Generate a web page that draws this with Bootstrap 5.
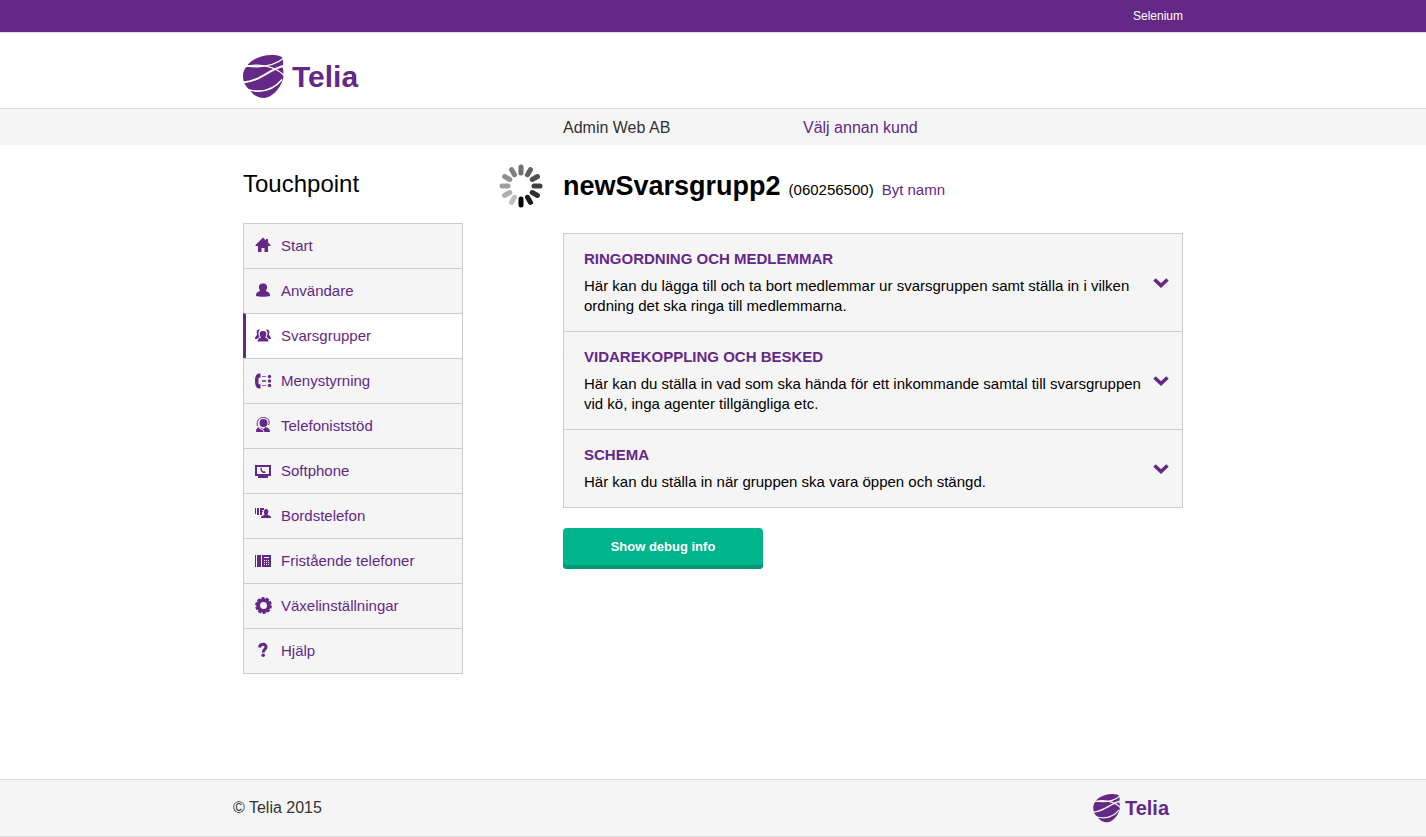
<!DOCTYPE html>
<html lang="sv">
<head>
<meta charset="utf-8">
<meta name="viewport" content="width=device-width, initial-scale=1">
<title>Telia Touchpoint</title>
<link href="https://cdn.jsdelivr.net/npm/bootstrap@5.3.0/dist/css/bootstrap.min.css" rel="stylesheet">
<style>
:root { --telia: #642887; --line: #ccc; --panel: #f5f5f5; }
body { font: 15px/20px "Liberation Sans", Arial, sans-serif; color: #000; background: #fff; }
a { color: var(--telia); text-decoration: none; }
a:hover { color: var(--telia); text-decoration: underline; }
.container { max-width: 960px; padding-left: 10px; padding-right: 10px; }
.row { --bs-gutter-x: 20px; }
.topbar { background: var(--telia); border-bottom: 1px solid #ddd; font-size: 12px; line-height: 32px; }
.topbar a { color: #fff; }
.brandbar { height: 75px; padding-top: 22px; }
.brand { display: inline-flex; align-items: center; color: var(--telia); font-weight: bold; }
.brand:hover { text-decoration: none; }
.brand-lg { gap: 7px; font-size: 30px; line-height: 44px; }
.brand-sm { gap: 4px; font-size: 20px; line-height: 30px; }
.customer { background: var(--panel); border-top: 1px solid #ddd; font-size: 16px; line-height: 34px; padding-top: 2px; color: #333; }
.product { font-size: 24px; line-height: 30px; font-weight: normal; margin: 24px 0 24px; }
.side .list-group-item { display: flex; align-items: center; gap: 9px; height: 45px; padding: 0 0 0 10px; background: var(--panel); color: var(--telia); border: 1px solid var(--line); border-bottom: 0; }
.side .list-group-item + .list-group-item.active { margin-top: 0; border-top-width: 1px; }
.side .list-group-item:last-child { height: 46px; border-bottom: 1px solid var(--line); }
.side .list-group-item.active { background: #fff; border-left: 3px solid var(--telia); padding-left: 8px; }
.side svg { fill: currentColor; width: 18px; height: 18px; flex: none; }
.title-row { margin: 24px 0 29px; }
.title-row h1 { font-size: 27px; line-height: 35px; font-weight: bold; margin: 0; }
.spin { margin-top: 19px; }
.panels .list-group-item { padding: 15px 13px 15px 20px; background: var(--panel); border: 1px solid var(--line); border-bottom: 0; color: #000; text-align: left; }
.panels .list-group-item:last-child { border-bottom: 1px solid var(--line); }
.panels h2 { font-size: 15px; line-height: 20px; font-weight: bold; color: var(--telia); margin: 0 0 7px; }
.btn-debug, .btn-debug:hover { width: 200px; height: 41px; padding: 0 0 3px; margin-top: 20px; background: #00b48c; color: #fff; border: 0; border-radius: 4px; box-shadow: inset 0 -4px #009974; font-size: 13px; font-weight: bold; }
.foot { background: var(--panel); border-top: 1px solid #ddd; border-bottom: 1px solid #ddd; font-size: 16px; color: #333; }
.foot-inner { height: 56px; padding: 0; }
</style>
</head>
<body class="d-flex flex-column min-vh-100">
<svg class="d-none" aria-hidden="true">
  <symbol id="globe-main" viewBox="0 0 42 44">
    <path fill="#642887" d="M0 20C1 10 12 0 29 0c6 0 10 1 11 4l.5 16C41 28 31 43 21 43 14 43 9 39 7 35 2 31 0 27 0 20z"/>
    <path fill="none" stroke="#fff" stroke-width="1.400" d="M2 11.500C14 9 30 9.500 42 21M4 11C18 13 31 11 41 3"/>
    <path fill="none" stroke="#fff" stroke-width="2" d="M0 27.500C18 26 24 15 42 10.500"/>
    <path fill="none" stroke="#fff" stroke-width="1.600" d="M4 34.500c15 4 27 0 35-10"/>
    <path fill="#fff" d="M39 12l4-2v9zM0 9l5 1-5 5z"/>
  </symbol>
  <symbol id="globe-foot" viewBox="0 0 42 44">
    <path fill="#642887" d="M0 20C1 10 12 0 29 0c6 0 10 1 11 4l.5 16C41 28 31 43 21 43 14 43 9 39 7 35 2 31 0 27 0 20z"/>
    <path fill="none" stroke="#f5f5f5" stroke-width="1.800" d="M2 11.500C14 9 30 9.500 42 21M4 11C18 13 31 11 41 3M4 34.500c15 4 27 0 35-10"/>
    <path fill="none" stroke="#f5f5f5" stroke-width="2.200" d="M0 27.500C18 26 24 15 42 10.500"/>
    <path fill="#f5f5f5" d="M39 12l4-2v9z"/>
  </symbol>
  <symbol id="chev" viewBox="0 0 16 12"><path d="M1.500 2.500L8 8.500l6.500-6" fill="none" stroke="#642887" stroke-width="3.600"/></symbol>
</svg>

<div class="topbar"><div class="container d-flex justify-content-end"><a href="#">Selenium</a></div></div>
<header>
  <div class="brandbar"><div class="container">
    <a class="brand brand-lg" href="#"><svg width="42" height="44"><use href="#globe-main"/></svg><span>Telia</span></a>
  </div></div>
  <div class="customer"><div class="container"><div class="row">
    <div class="col-3 offset-4">Admin Web AB</div>
    <div class="col-3"><a href="#">Välj annan kund</a></div>
  </div></div></div>
</header>

<main class="container flex-grow-1 pb-5">
  <div class="row">
    <div class="col-3">
      <div class="product">Touchpoint</div>
      <nav class="list-group rounded-0 side">
        <a class="list-group-item" href="#"><svg viewBox="0 0 18 18"><path d="M9 .5L1.500 8v1H4v6h3.500v-4h3v4H14V9h2.500V8L14 5.500V2h-2v1.500z"/></svg>Start</a>
        <a class="list-group-item" href="#"><svg viewBox="0 0 18 18"><path d="M9 1.500c3 0 4.500 2 4 4.500 0 1-1 2-1 3 2 1 4 1 4 5-3 1-11 1-14 0 0-4 2-4 4-5 0-1-1-2-1-3-.5-2.500 1-4.500 4-4.500z"/></svg>Användare</a>
        <a class="list-group-item active" href="#" aria-current="page"><svg viewBox="0 0 18 18"><path d="M9 4c3 0 4 2 3 5l-1 1.500c2 .5 3.500 1.500 3.500 4h-11c0-2.500 1.500-3.500 3.500-4L6 9C5 6 6 4 9 4z"/><path d="M6 2.500C3 2 2 4 3 7c0 2-2 2-2 5h2l2.500-2C4 7 4 5 6 2.500zM12 2.500c3-.5 4 1.500 3 4.500 0 2 2 2 2 5h-2l-2.500-2c1.500-3 1.500-5-.5-7.500z"/></svg>Svarsgrupper</a>
        <a class="list-group-item" href="#"><svg viewBox="0 0 18 18"><path d="M5 1.500h1.500v4L4.500 6v6l2 .5v4H5C2 16 1 13 1 9s1-7 4-7.500z"/><path d="M8 4h4v1H8zM8 8h4v2H8zM8 13h4v1H8z" opacity=".75"/><circle cx="15.500" cy="4.500" r="1.700"/><circle cx="15.500" cy="9" r="1.700"/><circle cx="15.500" cy="13.500" r="1.700"/></svg>Menystyrning</a>
        <a class="list-group-item" href="#"><svg viewBox="0 0 18 18"><circle cx="9.500" cy="6" r="4"/><path d="M3.500 9C2 4 5 .5 9.500.5s7 3.500 5 7.500" fill="none" stroke="currentColor"/><path d="M3.500 8C4 10 7 11 9.500 12l2-2c3 1 4.500 2 4.500 5H2c0-3 1-4 3-5z"/><path d="M5 10c0 3 5 1.500 5 5" fill="none" stroke="#f5f5f5"/></svg>Telefoniststöd</a>
        <a class="list-group-item" href="#"><svg viewBox="0 0 18 18"><path fill-rule="evenodd" d="M1 3h16v11H1zM3 5v7h12V5zM4 14h10v2H4z"/><path d="M6.500 5.500l1.500.5-.3 1.500c.5 1 1 1.500 2 2l1-.5 1 1.500c-3 2-6-2-5.200-5z"/></svg>Softphone</a>
        <a class="list-group-item" href="#"><svg viewBox="0 0 18 18"><path d="M1 1h1v6H1zM3 1h2v7H3zM6 1h4v2H8v1h1v1H8v3H6zM12 2c2 0 3 2 2 4l-.5 2c3 .5 3.500 1 3.500 3H7c0-2 1-2.500 3.500-3L10 6c0-2 0-4 2-4z"/></svg>Bordstelefon</a>
        <a class="list-group-item" href="#"><svg viewBox="0 0 18 18"><path d="M1 3h1v12H1zM3 3h4v12H3z"/><path fill-rule="evenodd" d="M8 3h9v12H8zM10 5v1h5V5zM10 8v1h1V8zM12 8v1h1V8zM14 8v1h1V8zM10 10v1h1v-1zM12 10v1h1v-1zM14 10v1h1v-1zM10 12v1h1v-1zM12 12v1h1v-1zM14 12v1h1v-1z"/></svg>Fristående telefoner</a>
        <a class="list-group-item" href="#"><svg viewBox="0 0 18 18"><circle cx="9.500" cy="8.500" r="5.400" fill="none" stroke="currentColor" stroke-width="3.800"/><circle cx="9.500" cy="8.500" r="7.300" fill="none" stroke="currentColor" stroke-width="2.200" stroke-dasharray="3 1.587"/></svg>Växelinställningar</a>
        <a class="list-group-item" href="#"><svg viewBox="0 0 18 18"><path d="M5.500 5.500C6 1 12.500 1.500 12 5.200c-.3 2-2.800 2.300-2.800 5.300" fill="none" stroke="currentColor" stroke-width="3"/><circle cx="9.200" cy="13.300" r="1.800"/></svg>Hjälp</a>
      </nav>
    </div>
    <div class="col-1 d-flex justify-content-end align-items-start">
      <svg class="spin flex-shrink-0" width="44" height="44" viewBox="-22 -22 44 44" role="img" aria-label="Laddar" stroke-width="5" stroke-linecap="round">
        <path d="M0-13V-19" stroke="#707070"/><path d="M0-13V-19" stroke="#606060" transform="rotate(30)"/><path d="M0-13V-19" stroke="#505050" transform="rotate(60)"/><path d="M0-13V-19" stroke="#404040" transform="rotate(90)"/><path d="M0-13V-19" stroke="#303030" transform="rotate(120)"/><path d="M0-13V-19" stroke="#1c1c1c" transform="rotate(150)"/><path d="M0-13V-19" stroke="#000" transform="rotate(180)"/><path d="M0-13V-19" stroke="#c0c0c0" transform="rotate(210)"/><path d="M0-13V-19" stroke="#b0b0b0" transform="rotate(240)"/><path d="M0-13V-19" stroke="#a0a0a0" transform="rotate(270)"/><path d="M0-13V-19" stroke="#909090" transform="rotate(300)"/><path d="M0-13V-19" stroke="#808080" transform="rotate(330)"/>
      </svg>
    </div>
    <div class="col-8">
      <div class="title-row d-flex align-items-baseline gap-2"><h1>newSvarsgrupp2</h1><span>(060256500)</span><a href="#">Byt namn</a></div>
      <div class="list-group rounded-0 panels">
        <button type="button" class="list-group-item d-flex align-items-center justify-content-between gap-2"><span><h2>RINGORDNING OCH MEDLEMMAR</h2>Här kan du lägga till och ta bort medlemmar ur svarsgruppen samt ställa in i vilken ordning det ska ringa till medlemmarna.</span><svg class="flex-shrink-0" width="16" height="12"><use href="#chev"/></svg></button>
        <button type="button" class="list-group-item d-flex align-items-center justify-content-between gap-2"><span><h2>VIDAREKOPPLING OCH BESKED</h2>Här kan du ställa in vad som ska hända för ett inkommande samtal till svarsgruppen vid kö, inga agenter tillgängliga etc.</span><svg class="flex-shrink-0" width="16" height="12"><use href="#chev"/></svg></button>
        <button type="button" class="list-group-item d-flex align-items-center justify-content-between gap-2"><span><h2>SCHEMA</h2>Här kan du ställa in när gruppen ska vara öppen och stängd.</span><svg class="flex-shrink-0" width="16" height="12"><use href="#chev"/></svg></button>
      </div>
      <button type="button" class="btn btn-debug">Show debug info</button>
    </div>
  </div>
</main>

<footer class="foot"><div class="container"><div class="row"><div class="foot-inner d-flex align-items-center justify-content-between">
  <span>© Telia 2015</span>
  <a class="brand brand-sm me-4" href="#"><svg width="28" height="29"><use href="#globe-foot"/></svg><span>Telia</span></a>
</div></div></div></footer>
<script src="https://cdn.jsdelivr.net/npm/bootstrap@5.3.0/dist/js/bootstrap.bundle.min.js"></script>
</body>
</html>
